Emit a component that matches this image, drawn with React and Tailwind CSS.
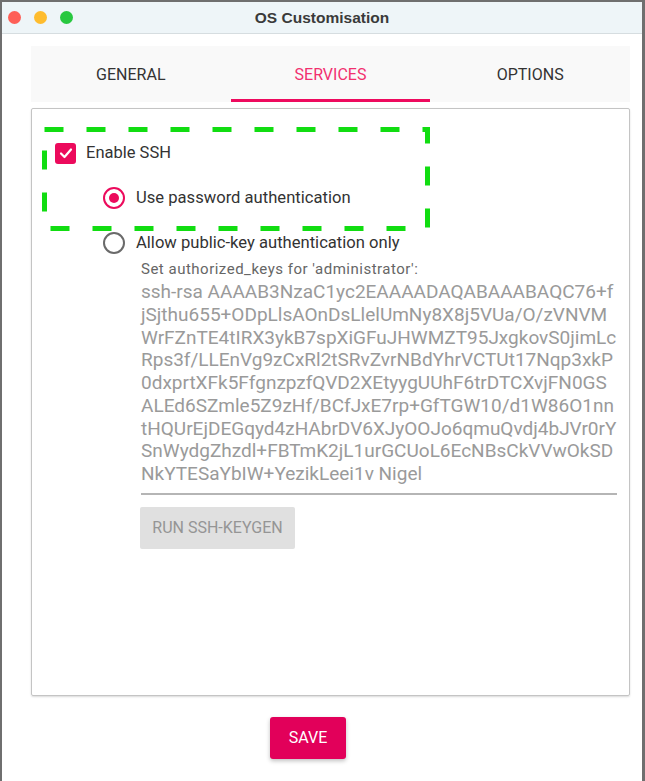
import React from "react";

const keyLines = [
  "ssh-rsa AAAAB3NzaC1yc2EAAAADAQABAAABAQC76+f",
  "jSjthu655+ODpLlsAOnDsLlelUmNy8X8j5VUa/O/zVNVM",
  "WrFZnTE4tIRX3ykB7spXiGFuJHWMZT95JxgkovS0jimLc",
  "Rps3f/LLEnVg9zCxRl2tSRvZvrNBdYhrVCTUt17Nqp3xkP",
  "0dxprtXFk5FfgnzpzfQVD2XEtyygUUhF6trDTCXvjFN0GS",
  "ALEd6SZmle5Z9zHf/BCfJxE7rp+GfTGW10/d1W86O1nn",
  "tHQUrEjDEGqyd4zHAbrDV6XJyOOJo6qmuQvdj4bJVr0rY",
  "SnWydgZhzdl+FBTmK2jL1urGCUoL6EcNBsCkVVwOkSD",
  "NkYTESaYbIW+YezikLeei1v Nigel",
];

export default function App() {
  return (
    <div className="relative w-[645px] h-[781px] bg-white border-l-2 border-r-[3px] border-t-2 border-[#6f6f6f] flex flex-col font-['Roboto',sans-serif]">
      {/* title bar */}
      <div className="relative h-[32px] shrink-0 bg-[#eef5f8] border-b border-[#d6dde0] flex items-center justify-center">
        <div className="absolute left-[6px] top-[9px] flex gap-[13px]">
          <span className="w-[13px] h-[13px] rounded-full bg-[#fe5f57]" />
          <span className="w-[13px] h-[13px] rounded-full bg-[#febc2e]" />
          <span className="w-[13px] h-[13px] rounded-full bg-[#28c840]" />
        </div>
        <span className="font-['Liberation_Sans',sans-serif] font-bold text-[15.5px] text-[#3a3a3a]">OS Customisation</span>
      </div>

      {/* tabs */}
      <div className="ml-[29px] mr-[12px] mt-[12px] h-[56px] bg-[#f9f9f9] grid grid-cols-3 text-[16px]">
        <div className="flex items-center justify-center pt-[2px] text-[#333]">GENERAL</div>
        <div className="relative flex items-center justify-center pt-[2px] text-[#f2306f]">
          SERVICES
          <span className="absolute left-0 right-0 bottom-0 h-[3px] bg-[#ee0a5e]" />
        </div>
        <div className="flex items-center justify-center pt-[2px] text-[#333]">OPTIONS</div>
      </div>

      {/* panel */}
      <div className="ml-[29px] mr-[12px] mt-[6px] h-[588px] border border-[#c4c4c4] shadow-[0_1px_2px_rgba(0,0,0,0.15)] rounded-[2px] pl-[23px] pt-[33px]">
        <div className="flex items-center h-[22px]">
          <div className="w-[21px] h-[21px] rounded-[3px] bg-[#ec0a5c] flex items-center justify-center">
            <svg width="14" height="14" viewBox="0 0 14 14" fill="none">
              <polyline points="2,7.5 5.5,11 12,3.5" stroke="white" strokeWidth="2.2" strokeLinecap="round" strokeLinejoin="round" />
            </svg>
          </div>
          <span className="ml-[10px] text-[16.5px] text-[#333]">Enable SSH</span>
        </div>

        <div className="flex items-center h-[22px] mt-[23px] ml-[48px]">
          <div className="w-[22px] h-[22px] rounded-full border-2 border-[#ec0a5c] flex items-center justify-center">
            <div className="w-[10px] h-[10px] rounded-full bg-[#ec0a5c]" />
          </div>
          <span className="ml-[11px] text-[16.6px] text-[#333]">Use password authentication</span>
        </div>

        <div className="flex items-center h-[22px] mt-[23px] ml-[48px]">
          <div className="w-[22px] h-[22px] rounded-full border-2 border-[#6a6a6a]" />
          <span className="ml-[11px] text-[16.6px] text-[#333]">Allow public-key authentication only</span>
        </div>

        <div className="ml-[86px] mr-[12px]">
          <div className="mt-[7px] text-[15px] tracking-[0.5px] leading-[16px] text-[#666]">Set authorized_keys for 'administrator':</div>
          <div className="mt-[4px] pb-[7px] border-b-2 border-[#b5b5b5] text-[19px] leading-[22.75px] text-[#9a9a9a]">
            {keyLines.map((l, i) => (
              <div key={i} className="whitespace-nowrap">{l}</div>
            ))}
          </div>
          <button className="mt-[12px] -ml-[1px] h-[42px] w-[155px] bg-[#e0e0e0] rounded-[2px] text-[16px] text-[#959595] font-normal">
            RUN SSH-KEYGEN
          </button>
        </div>
      </div>

      {/* save */}
      <div className="flex justify-center mt-[21px] pr-[28px]">
        <button className="w-[76px] h-[42px] bg-[#e2005a] rounded-[3px] text-white text-[16px] shadow-[0_2px_4px_rgba(0,0,0,0.25)]">
          SAVE
        </button>
      </div>

      {/* annotation overlay */}
      <svg className="absolute left-[-2px] top-[-2px] pointer-events-none" width="645" height="781">
        <rect x="44.5" y="129.5" width="383" height="99" fill="none" stroke="#11dd11" strokeWidth="5" strokeDasharray="19 23" />
      </svg>
    </div>
  );
}
